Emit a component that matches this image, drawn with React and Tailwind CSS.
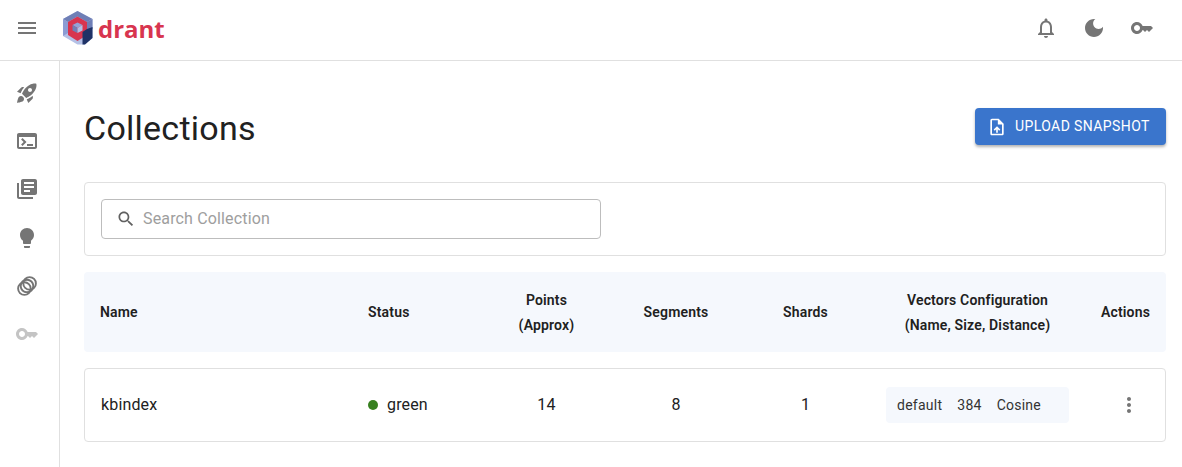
import React from 'react';

const ICONS = {
  menu: 'M3 18h18v-2H3v2zm0-5h18v-2H3v2zm0-7v2h18V6H3z',
  rocket: 'M9.19 6.35c-2.04 2.29-3.44 5.58-3.57 5.89L2 10.69l4.05-4.05c.47-.47 1.15-.68 1.81-.55l1.33.26zM11.17 17s3.74-1.55 5.89-3.7c5.4-5.4 4.5-9.62 4.21-10.57-.95-.3-5.17-1.19-10.57 4.21C8.55 9.09 7 12.83 7 12.83L11.17 17zm6.48-2.19c-2.29 2.04-5.58 3.44-5.89 3.57L13.31 22l4.05-4.05c.47-.47.68-1.15.55-1.81l-.26-1.33zM9 18c0 .83-.34 1.58-.88 2.12C6.94 21.3 2 22 2 22s.7-4.94 1.88-6.12C4.42 15.34 5.17 15 6 15c1.66 0 3 1.34 3 3zm4-9c0-1.1.9-2 2-2s2 .9 2 2-.9 2-2 2-2-.9-2-2z',
  terminal: 'M20 4H4c-1.11 0-2 .9-2 2v12c0 1.1.89 2 2 2h16c1.1 0 2-.9 2-2V6c0-1.1-.89-2-2-2zm0 14H4V8h16v10zm-2-1h-6v-2h6v2zM7.5 17l-1.41-1.41L8.67 13l-2.59-2.59L7.5 9l4 4-4 4z',
  books: 'M4 6H2v14c0 1.1.9 2 2 2h14v-2H4V6zm16-4H8c-1.1 0-2 .9-2 2v12c0 1.1.9 2 2 2h12c1.1 0 2-.9 2-2V4c0-1.1-.9-2-2-2zm-1 9H9V9h10v2zm-4 4H9v-2h6v2zm4-8H9V5h10v2z',
  bulb: 'M9 21c0 .5.4 1 1 1h4c.6 0 1-.5 1-1v-1H9v1zm3-19C8.1 2 5 5.1 5 9c0 2.4 1.2 4.5 3 5.7V17c0 .5.4 1 1 1h6c.6 0 1-.5 1-1v-2.3c1.8-1.3 3-3.4 3-5.7 0-3.9-3.1-7-7-7z',
  key: 'M21 10h-8.35C11.83 7.67 9.61 6 7 6c-3.31 0-6 2.69-6 6s2.69 6 6 6c2.61 0 4.83-1.67 5.65-4H13l2 2 2-2 2 2 4-4.04L21 10zM7 15c-1.65 0-3-1.35-3-3s1.35-3 3-3 3 1.35 3 3-1.35 3-3 3z',
  moon: 'M12 3c-4.97 0-9 4.03-9 9s4.03 9 9 9 9-4.03 9-9c0-.46-.04-.92-.1-1.36-.98 1.37-2.58 2.26-4.4 2.26-2.98 0-5.4-2.42-5.4-5.4 0-1.81.89-3.42 2.26-4.4-.44-.06-.9-.1-1.36-.1z',
  bell: 'M12 22c1.1 0 2-.9 2-2h-4c0 1.1.9 2 2 2zm6-6v-5c0-3.07-1.63-5.64-4.5-6.32V4c0-.83-.67-1.5-1.5-1.5s-1.5.67-1.5 1.5v.68C7.64 5.36 6 7.92 6 11v5l-2 2v1h16v-1l-2-2zm-2 1H8v-6c0-2.48 1.51-4.5 4-4.5s4 2.02 4 4.5v6z',
  upload: 'M14 2H6c-1.1 0-1.99.9-1.99 2L4 20c0 1.1.89 2 1.99 2H18c1.1 0 2-.9 2-2V8l-6-6zm4 18H6V4h7v5h5v11zM8 15.01l1.41 1.41L11 14.84V19h2v-4.16l1.59 1.59L16 15.01 12.01 11 8 15.01z',
  search: 'M15.5 14h-.79l-.28-.27C15.41 12.59 16 11.11 16 9.5 16 5.91 13.09 3 9.5 3S3 5.91 3 9.5 5.91 16 9.5 16c1.61 0 3.09-.59 4.23-1.57l.27.28v.79l5 4.99L20.49 19l-4.99-5zm-6 0C7.01 14 5 11.99 5 9.5S7.01 5 9.5 5 14 7.01 14 9.5 11.99 14 9.5 14z',
  more: 'M12 8c1.1 0 2-.9 2-2s-.9-2-2-2-2 .9-2 2 .9 2 2 2zm0 2c-1.1 0-2 .9-2 2s.9 2 2 2 2-.9 2-2-.9-2-2-2zm0 6c-1.1 0-2 .9-2 2s.9 2 2 2 2-.9 2-2-.9-2-2-2z',
};

// Material icons are all on a 24 grid
const Icon = ({ name, className }) => (
  <svg viewBox="0 0 24 24" fill="currentColor" className={className}>
    <path d={ICONS[name]} />
  </svg>
);

// three overlapping rings, not in the icon set
const Rings = ({ className }) => (
  <svg viewBox="0 0 24 24" fill="none" stroke="currentColor" strokeWidth="1.9" className={className}>
    <circle cx="14.6" cy="9.4" r="6.3" />
    <circle cx="12" cy="12" r="6.3" />
    <circle cx="9.4" cy="14.6" r="6.3" />
  </svg>
);

const Logo = () => (
  <svg viewBox="0 0 30 34" className="w-[30px] h-[34px]">
    <polygon points="14.5,0 29.5,8 29.5,27 22,33.5 14.5,33.5 0,25 0,8" fill="#b4c1e6" />
    <polygon points="14.5,0 29.5,8 24,11 14.5,5.5 5,11 0,8" fill="#6f7fb6" />
    <polygon points="0,8 5,11 5,22 0,25" fill="#8c9cd4" />
    <polygon points="24,11 29.5,8 29.5,18 24,18" fill="#6f7fb6" />
    <polygon points="14.5,5.5 24,11 24,24 14.5,30 5,24 5,11" fill="#d8354f" />
    <polygon points="14.5,11.5 19.5,14 14.5,17 9.5,14" fill="#93a3d6" />
    <polygon points="9.5,14 14.5,17 14.5,22 9.5,19.5" fill="#6f7fb6" />
    <polygon points="14.5,17 19.5,14 19.5,19.5 14.5,22" fill="#b4c1e6" />
    <polygon points="19.5,21 24,18 29.5,16 29.5,27 22,33.5 19.5,33.5" fill="#1f3266" />
  </svg>
);

const sideItems = [
  { id: 'rocket', node: <Icon name="rocket" className="w-6 h-6 text-[#757575]" /> },
  { id: 'terminal', node: <Icon name="terminal" className="w-6 h-6 text-[#757575]" /> },
  { id: 'books', node: <Icon name="books" className="w-6 h-6 text-[#757575]" /> },
  { id: 'bulb', node: <Icon name="bulb" className="w-6 h-6 text-[#757575]" /> },
  { id: 'rings', node: <Rings className="w-6 h-6 text-[#757575]" /> },
  { id: 'key', node: <Icon name="key" className="w-6 h-6 text-[#c4c4c4]" /> },
];

export default function App() {
  return (
    <div className="w-[1182px] h-[467px] overflow-hidden bg-white text-[#212121] font-['Roboto',sans-serif]">
      {/* Top bar */}
      <header className="h-[61px] border-b border-[#e0e0e0] flex items-center pl-[15px] pr-[28px] pb-[4px]">
        <Icon name="menu" className="w-6 h-6 text-[#757575]" />
        <div className="ml-[24px] flex items-center">
          <Logo />
          <span className="ml-[5px] font-['Open_Sans',sans-serif] font-bold text-[24px] leading-none text-[#d8354f] pt-[1px]">drant</span>
        </div>
        <div className="ml-auto flex items-center gap-6 text-[#757575]">
          <Icon name="bell" className="w-6 h-6" />
          <Icon name="moon" className="w-6 h-6" />
          <Icon name="key" className="w-6 h-6" />
        </div>
      </header>

      <div className="flex h-[406px]">
        {/* Sidebar */}
        <aside className="w-[60px] border-r border-[#e0e0e0] flex flex-col items-center gap-[24.2px] pt-[20px] pr-[5px] shrink-0">
          {sideItems.map((item) => (
            <div key={item.id}>{item.node}</div>
          ))}
        </aside>

        <main className="flex-1 min-w-0 pl-[24px] pr-[16px] pt-[47px]">
          <div className="flex items-center justify-between h-[37px]">
            <h1 className="text-[34px] font-normal leading-none tracking-[0.25px] pt-[3px]">Collections</h1>
            <button className="w-[191px] h-[37px] bg-[#3a75cc] text-white rounded-[4px] shadow-[0_2px_3px_rgba(0,0,0,0.3)] flex items-center pl-[12px] text-[14px] font-normal tracking-[0.4px]">
              <Icon name="upload" className="w-5 h-5" />
              <span className="ml-[8px]">UPLOAD SNAPSHOT</span>
            </button>
          </div>

          <div className="mt-[37px] h-[74px] border border-[#e0e0e0] rounded-[4px] flex items-center px-4">
            <div className="w-[500px] h-[40px] border border-[#bdbdbd] rounded-[4px] flex items-center pl-[14px]">
              <Icon name="search" className="w-[20px] h-[20px] text-[#616161]" />
              <span className="ml-[7px] text-[16px] tracking-[0.15px] text-[#9e9e9e]">Search Collection</span>
            </div>
          </div>

          <div className="grid grid-cols-[268px_130px_129px_130px_129px_215px_81px] items-center mt-4 h-[80px] bg-[#f5f8fd] rounded-[4px] text-[14px] tracking-[0.17px] font-semibold leading-[25px]">
            <div className="pl-4">Name</div>
            <div className="pl-4">Status</div>
            <div className="text-center pt-[1px]">Points<br />(Approx)</div>
            <div className="text-center">Segments</div>
            <div className="text-center">Shards</div>
            <div className="text-center pt-[1px]">Vectors Configuration<br />(Name, Size, Distance)</div>
            <div className="text-center">Actions</div>
          </div>

          <div className="grid grid-cols-[267px_130px_129px_130px_129px_215px_80px] items-center mt-4 h-[74px] border border-[#e0e0e0] rounded-[4px] text-[16px] tracking-[0.15px]">
            <div className="pl-4">kbindex</div>
            <div className="pl-4 flex items-center gap-[9px]">
              <span className="w-[10px] h-[10px] rounded-full bg-[#37801f]" />
              <span>green</span>
            </div>
            <div className="text-center">14</div>
            <div className="text-center">8</div>
            <div className="text-center">1</div>
            <div className="flex justify-center">
              <div className="w-[183px] h-[36px] bg-[#f5f8fd] rounded-[4px] flex items-center pl-[11px] gap-[15px] text-[14px] tracking-[0.25px] text-[#333333]">
                <span>default</span>
                <span>384</span>
                <span>Cosine</span>
              </div>
            </div>
            <div className="flex justify-center pl-[8px]">
              <Icon name="more" className="w-6 h-6 text-[#757575]" />
            </div>
          </div>
        </main>
      </div>
    </div>
  );
}
